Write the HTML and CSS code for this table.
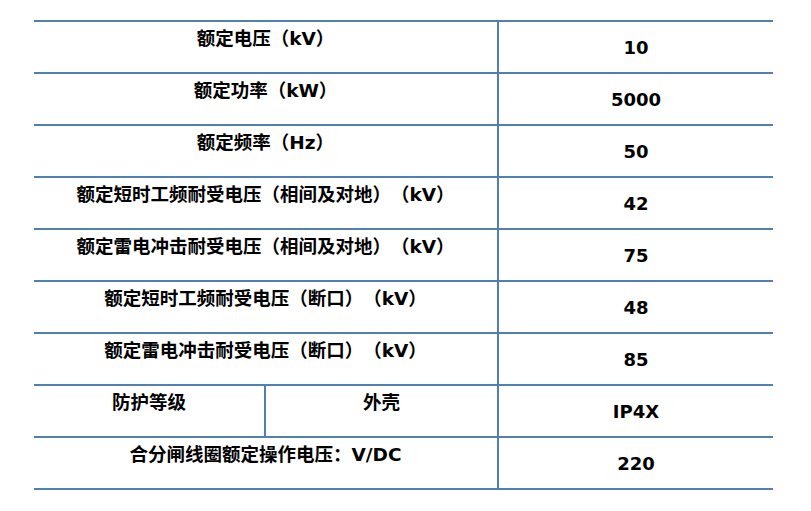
FILE: index.html
```html
<!DOCTYPE html>
<html lang="zh-CN">
<head>
<meta charset="utf-8">
<title>参数表</title>
<link rel="stylesheet" href="styles.css">
</head>
<body>
<table class="spec">
  <colgroup>
    <col class="c1">
    <col class="c2">
    <col class="c3">
  </colgroup>
  <tbody>
    <tr><td class="label" colspan="2">额定电压（kV）</td><td class="value">10</td></tr>
    <tr><td class="label" colspan="2">额定功率（kW）</td><td class="value">5000</td></tr>
    <tr><td class="label" colspan="2">额定频率（Hz）</td><td class="value">50</td></tr>
    <tr><td class="label" colspan="2">额定短时工频耐受电压（相间及对地）（kV）</td><td class="value">42</td></tr>
    <tr><td class="label" colspan="2">额定雷电冲击耐受电压（相间及对地）（kV）</td><td class="value">75</td></tr>
    <tr><td class="label" colspan="2">额定短时工频耐受电压（断口）（kV）</td><td class="value">48</td></tr>
    <tr><td class="label" colspan="2">额定雷电冲击耐受电压（断口）（kV）</td><td class="value">85</td></tr>
    <tr><td class="label">防护等级</td><td class="label sub">外壳</td><td class="value">IP4X</td></tr>
    <tr><td class="label" colspan="2">合分闸线圈额定操作电压：V/DC</td><td class="value">220</td></tr>
  </tbody>
</table>
</body>
</html>
```
FILE: styles.css
```css
html, body {
  margin: 0;
  padding: 0;
  background: #ffffff;
}

.spec {
  margin: 20px 0 0 34px;
  width: 739px;
  table-layout: fixed;
  border-collapse: separate;
  border-spacing: 0;
  border-top: 2px solid #4f7fb4;
  font-family: "DejaVu Sans", "Noto Sans CJK SC", sans-serif;
  font-weight: bold;
  font-size: 18px;
  color: #000;
}

.c1 { width: 230px; }
.c2 { width: 233px; }
.c3 { width: 276px; }

.spec td {
  height: 50px;
  padding: 0;
  border-bottom: 2px solid #4f7fb4;
  text-align: center;
  line-height: 24px;
  white-space: nowrap;
}

.spec .label {
  vertical-align: top;
  padding-top: 5px;
  height: 45px;
  font-size: 18.5px;
  text-spacing-trim: space-all;
}

.spec .sub,
.spec .value {
  border-left: 2px solid #4f7fb4;
}

.spec .value {
  vertical-align: middle;
  padding-top: 2px;
  height: 48px;
}
```
